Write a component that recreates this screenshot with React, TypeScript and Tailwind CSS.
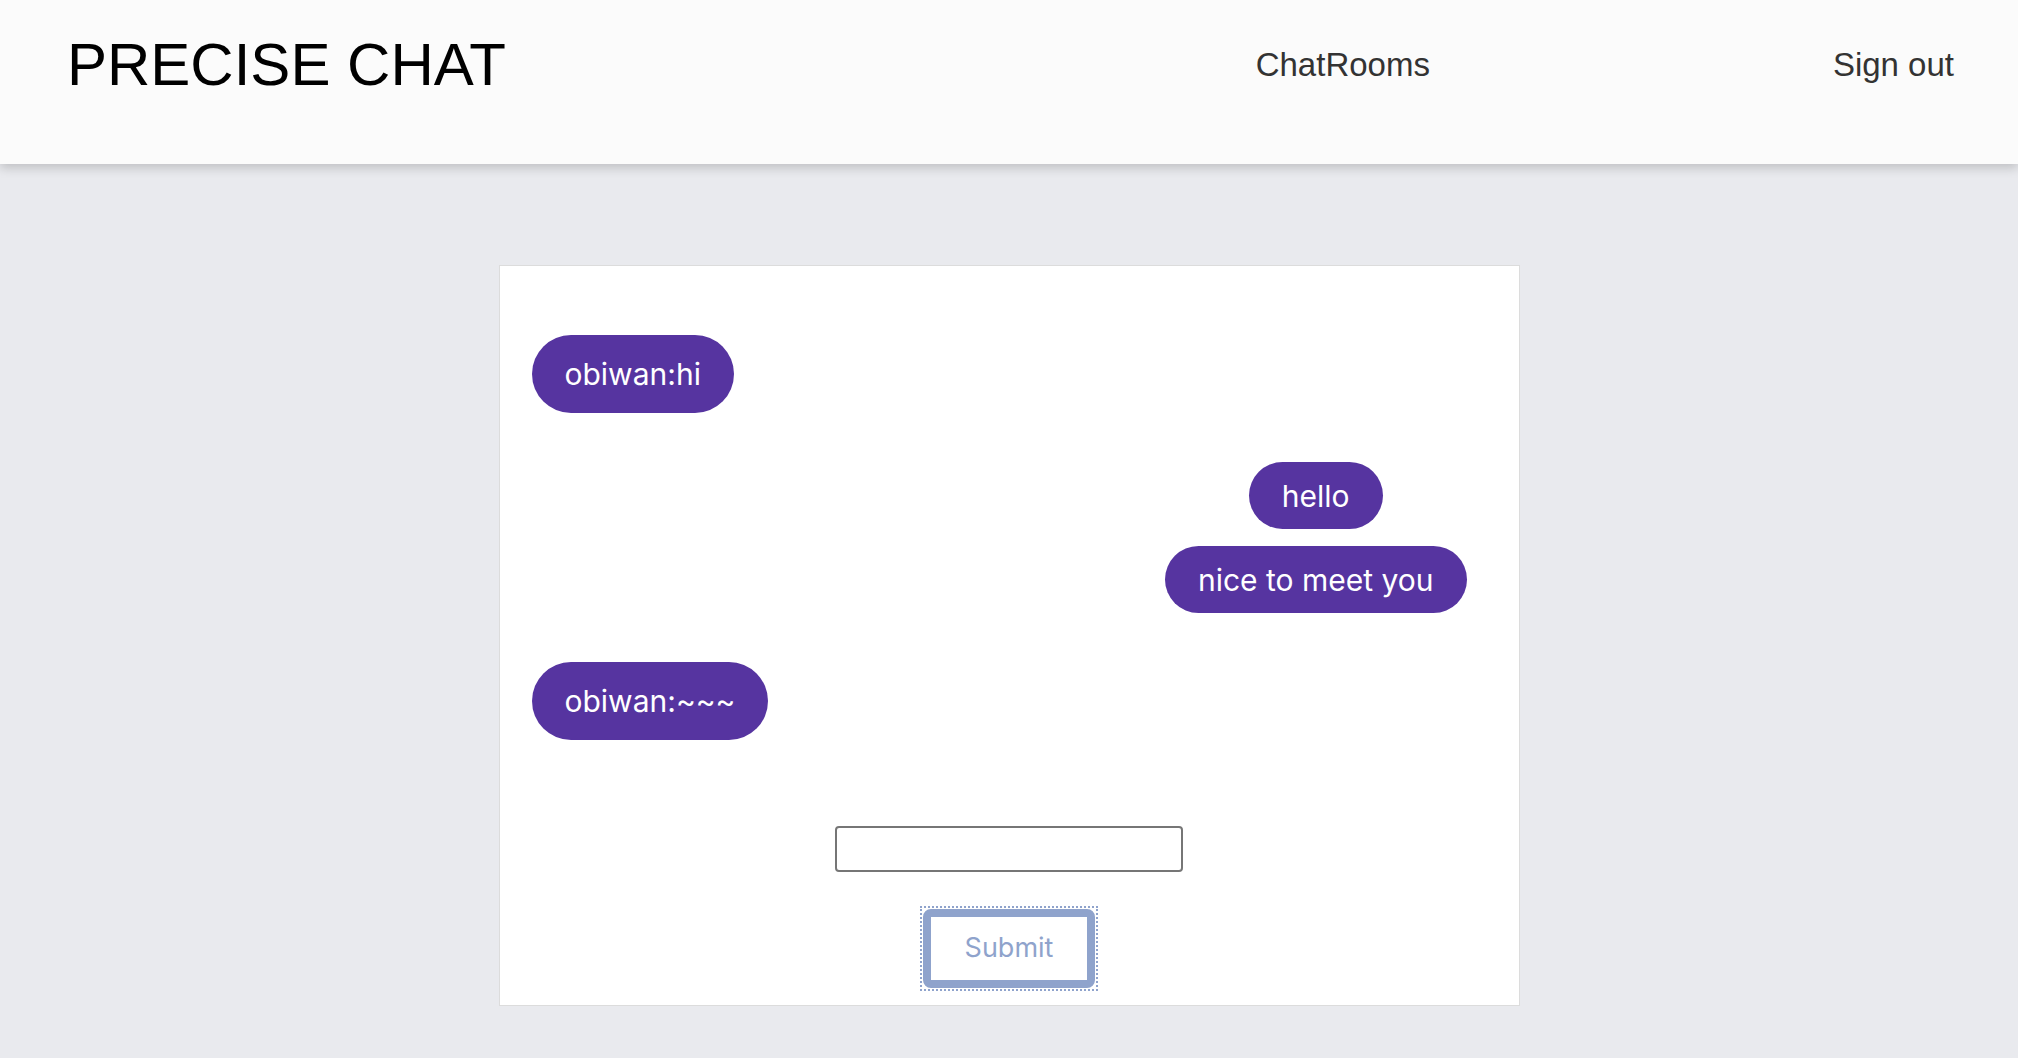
import React from 'react';

const messages = [
  { side: 'left', text: 'obiwan:hi' },
  { side: 'right', texts: ['hello', 'nice to meet you'] },
  { side: 'left', text: 'obiwan:~~~' },
];

const Bubble = ({ text, tall }: { text: string; tall?: boolean }) => (
  <div
    className={`inline-block rounded-full bg-[#5634a0] px-[33px] text-[30px] leading-[36px] text-white ${
      tall ? 'py-[21px]' : 'py-[15.5px]'
    }`}
  >
    {text}
  </div>
);

const App = () => {
  return (
    <div className="min-h-[1058px] bg-[#e9eaee] font-['Inter',sans-serif]">
      <header className="relative flex h-[164px] items-center bg-[#fbfbfb] pb-[34px] pl-[67px] pr-[64px] font-['Liberation_Sans',Arial,sans-serif] shadow-[0_4px_10px_rgba(0,0,0,0.18)]">
        <h1 className="text-[60px] leading-none text-black">PRECISE CHAT</h1>
        <nav className="ml-auto flex gap-[403px] text-[33px] text-[#333]">
          <a>ChatRooms</a>
          <a>Sign out</a>
        </nav>
      </header>

      <main className="flex justify-center pt-[101px]">
        <div className="flex w-[1021px] flex-col border border-[#dcdcdc] bg-white px-8 pb-[14px] pt-[69px]">
          <div className="flex flex-col gap-[49px]">
            {messages.map((m, i) =>
              m.side === 'left' ? (
                <div key={i} className="flex">
                  <Bubble text={m.text!} tall />
                </div>
              ) : (
                <div key={i} className="flex justify-end pr-[20px]">
                  <div className="flex flex-col items-center gap-[17px]">
                    {m.texts!.map((t) => (
                      <Bubble key={t} text={t} />
                    ))}
                  </div>
                </div>
              )
            )}
          </div>

          <form className="mt-[86px] flex flex-col items-center">
            <input
              type="text"
              className="h-[46px] w-[348px] rounded-[4px] border-2 border-[#767676] bg-white px-2 text-[20px] outline-none"
            />
            {/* focus ring drawn as a dotted frame */}
            <span className="mt-[34px] inline-flex border-2 border-dotted border-[#8fa3cc] p-[1px]">
              <button
                type="button"
                className="h-[79px] w-[172px] rounded-[8px] border-[8px] border-[#8fa3cc] bg-white text-[27px] text-[#8fa3cc]"
              >
                Submit
              </button>
            </span>
          </form>
        </div>
      </main>
    </div>
  );
};

export default App;
